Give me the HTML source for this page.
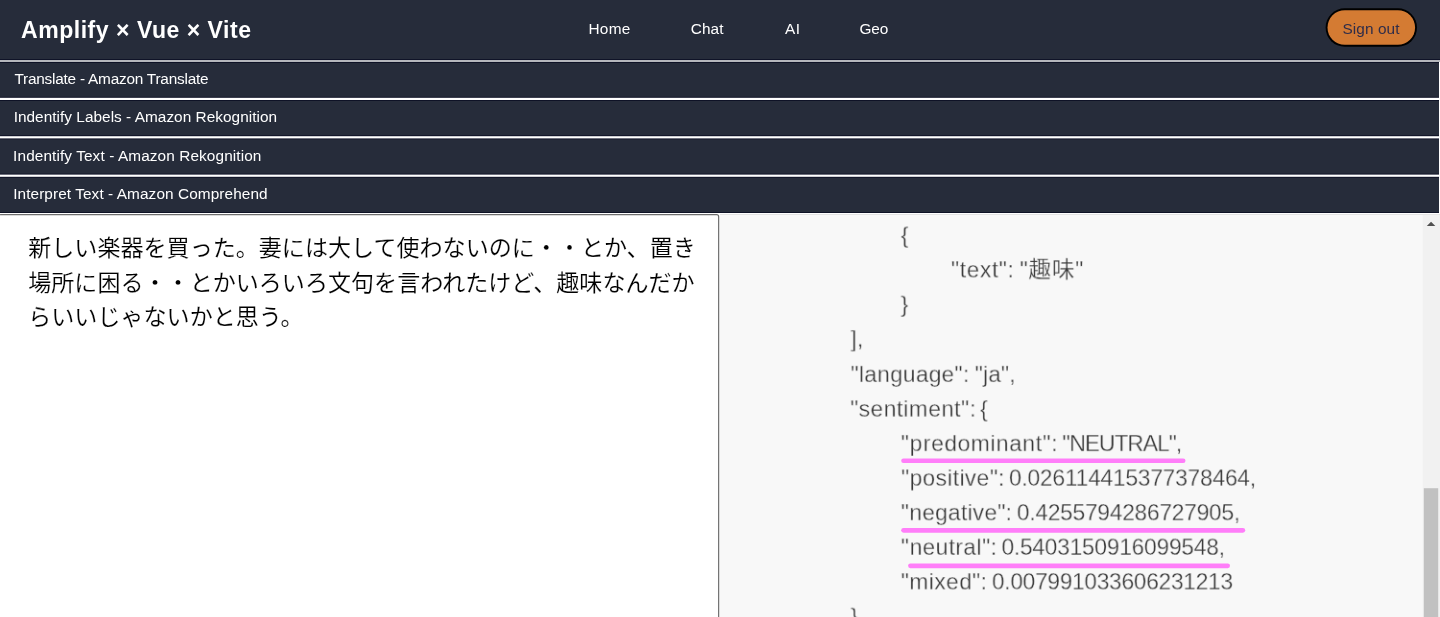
<!DOCTYPE html>
<html lang="ja">
<head>
<meta charset="utf-8">
<title>Amplify × Vue × Vite</title>
<style>
html,body{margin:0;padding:0;background:#fff;overflow:hidden;}
body{width:1440px;height:617px;position:relative;font-family:"Liberation Sans","Noto Sans CJK JP",sans-serif;}
#bg{position:absolute;left:0;top:0;}
#app{position:absolute;left:0;top:0;width:1500px;height:643px;transform:scale(0.96);transform-origin:0 0;overflow:hidden;}
#out{will-change:transform;}
.t{position:absolute;margin:0;padding:0;border:0;background:none;white-space:pre;line-height:1;font-family:inherit;font-weight:normal;}
#title{color:#fff;font-weight:bold;}
.nav,.ih{color:#fff;}
#btn{color:#2f2d49;}
.jp{color:#000;-webkit-text-stroke:0.15px #fff;}
.js{color:#363636;-webkit-text-stroke:0.32px #f8f8f8;}
.js span{display:inline-block;}
#ta{position:absolute;left:-1px;top:223px;width:750px;height:440px;box-sizing:border-box;margin:0;border:1px solid transparent;border-radius:2px;background:transparent;outline:none;resize:none;overflow:hidden;font-family:inherit;font-size:24px;line-height:36px;white-space:pre-wrap;word-break:break-all;}
</style>
</head>
<body>
<svg id="bg" width="1440" height="617" viewBox="0 0 1440 617">
  <!-- header -->
  <rect x="0" y="0" width="1440" height="60" fill="#0e1226"/>
  <rect x="0" y="0" width="1440" height="59.05" fill="#262c3a"/>
  <rect x="0" y="60" width="1440" height="2" fill="#b5b7bc"/>
  <!-- accordion items -->
  <g id="items">
    <rect x="-2" y="62" width="1441" height="35.8" fill="#0e1226"/><rect x="-2" y="62.96" width="1441" height="33.88" fill="#262c3a"/>
    <rect x="-2" y="100" width="1441" height="36.2" fill="#0e1226"/><rect x="-2" y="100.96" width="1441" height="34.28" fill="#262c3a"/>
    <rect x="-2" y="138.4" width="1441" height="36.2" fill="#0e1226"/><rect x="-2" y="139.36" width="1441" height="34.28" fill="#262c3a"/>
    <rect x="-2" y="176.8" width="1441" height="36.2" fill="#0e1226"/><rect x="-2" y="177.76" width="1441" height="34.28" fill="#262c3a"/>
  </g>
  <!-- sign out pill -->
  <rect x="1325.6" y="8.35" width="91.4" height="38.4" rx="19.2" fill="#000"/>
  <rect x="1327.5" y="10.25" width="87.6" height="34.6" rx="17.3" fill="#d47b33"/>
  <!-- textarea -->
  <rect x="-1.5" y="214.7" width="720.15" height="420" rx="2" fill="#fff" stroke="#6e6e6e" stroke-width="1.2"/>
  <!-- output panel -->
  <rect x="720" y="214" width="720" height="403" fill="#e2e2e2"/>
  <rect x="720" y="214.96" width="720" height="403" fill="#f8f8f8"/>
  <!-- highlights -->
  <g stroke="#ff7ef9" stroke-width="4.6" stroke-linecap="round">
    <line x1="903.5" y1="460.7" x2="1183.2" y2="460.7"/>
    <line x1="903.5" y1="530.35" x2="1242.9" y2="530.35"/>
    <line x1="910.4" y1="565.85" x2="1227.7" y2="565.85"/>
  </g>
  <!-- scrollbar -->
  <rect x="1422.7" y="214.96" width="17.3" height="403" fill="#f1f1f1"/>
  <path d="M1426.8 226.1 L1431.05 221.8 L1435.3 226.1 Z" fill="#505050"/>
  <rect x="1423.8" y="488.2" width="14.4" height="130" fill="#c1c1c1"/>
</svg>

<div id="app">
  <header id="header">
    <h1 id="title" class="t" style="left:21.97px;top:20.02px;font-size:24.00px;letter-spacing:0.527px">Amplify × Vue × Vite</h1>
    <nav id="nav">
      <a id="nav1" class="t nav" style="left:612.93px;top:21.97px;font-size:16.00px;letter-spacing:0.330px">Home</a>
      <a id="nav2" class="t nav" style="left:719.57px;top:22.03px;font-size:16.00px;letter-spacing:0.099px">Chat</a>
      <a id="nav3" class="t nav" style="left:817.61px;top:22.00px;font-size:16.00px;letter-spacing:0.536px">AI</a>
      <a id="nav4" class="t nav" style="left:895.39px;top:21.97px;font-size:16.00px;letter-spacing:-0.200px">Geo</a>
    </nav>
    <button id="btn" class="t" style="left:1398.33px;top:21.95px;font-size:16.00px;letter-spacing:0.113px">Sign out</button>
  </header>
  <main id="main">
    <section class="item"><div id="it1" class="t ih" style="left:15.01px;top:74.47px;font-size:16.00px;letter-spacing:-0.228px">Translate - Amazon Translate</div></section>
    <section class="item"><div id="it2" class="t ih" style="left:14.23px;top:113.95px;font-size:16.00px;letter-spacing:0.036px">Indentify Labels - Amazon Rekognition</div></section>
    <section class="item"><div id="it3" class="t ih" style="left:13.67px;top:154.97px;font-size:16.00px;letter-spacing:0.107px">Indentify Text - Amazon Rekognition</div></section>
    <section class="item"><div id="it4" class="t ih" style="left:13.74px;top:193.96px;font-size:16.00px;letter-spacing:0.088px">Interpret Text - Amazon Comprehend</div></section>
    <textarea id="ta" class="jp" spellcheck="false" style="padding:17.00px 12px 0 29.40px;letter-spacing:0.020px">新しい楽器を買った。妻には大して使わないのに・・とか、置き場所に困る・・とかいろいろ文句を言われたけど、趣味なんだからいいじゃないかと思う。</textarea>
    <div id="out">
      <div id="j0" class="t js" style="left:938.43px;top:233.95px;font-size:23.60px"><span id="j0k" style="letter-spacing:0.000px">{</span></div>
      <div id="j1" class="t js" style="left:990.63px;top:269.96px;font-size:23.60px"><span id="j1k" style="letter-spacing:0.696px">"text":</span> <span id="j1v" style="margin-left:-1.23px;letter-spacing:0.742px">"趣味"</span></div>
      <div id="j2" class="t js" style="left:938.32px;top:306.04px;font-size:23.60px"><span id="j2k" style="letter-spacing:0.000px">}</span></div>
      <div id="j3" class="t js" style="left:886.08px;top:341.98px;font-size:23.60px"><span id="j3k" style="letter-spacing:0.000px">],</span></div>
      <div id="j4" class="t js" style="left:886.04px;top:379.04px;font-size:23.60px"><span id="j4k" style="letter-spacing:0.310px">"language":</span> <span id="j4v" style="margin-left:-0.82px;letter-spacing:0.121px">"ja",</span></div>
      <div id="j5" class="t js" style="left:885.76px;top:414.95px;font-size:23.60px"><span id="j5k" style="letter-spacing:0.468px">"sentiment":</span> <span id="j5v" style="margin-left:-2.64px;letter-spacing:0.000px">{</span></div>
      <div id="j6" class="t js" style="left:938.59px;top:450.95px;font-size:23.60px"><span id="j6k" style="letter-spacing:0.662px">"predominant":</span> <span id="j6v" style="margin-left:-2.36px;letter-spacing:-0.950px">"NEUTRAL",</span></div>
      <div id="j7" class="t js" style="left:938.64px;top:486.98px;font-size:23.60px"><span id="j7k" style="letter-spacing:0.434px">"positive":</span> <span id="j7v" style="margin-left:-2.24px;letter-spacing:-0.168px">0.026114415377378464,</span></div>
      <div id="j8" class="t js" style="left:938.53px;top:523.01px;font-size:23.60px"><span id="j8k" style="letter-spacing:0.314px">"negative":</span> <span id="j8v" style="margin-left:-1.78px;letter-spacing:-0.207px">0.4255794286727905,</span></div>
      <div id="j9" class="t js" style="left:938.56px;top:559.03px;font-size:23.60px"><span id="j9k" style="letter-spacing:0.483px">"neutral":</span> <span id="j9v" style="margin-left:-2.27px;letter-spacing:-0.186px">0.5403150916099548,</span></div>
      <div id="j10" class="t js" style="left:938.47px;top:595.03px;font-size:23.60px"><span id="j10k" style="letter-spacing:0.495px">"mixed":</span> <span id="j10v" style="margin-left:-2.01px;letter-spacing:-0.253px">0.007991033606231213</span></div>
      <div id="j11" class="t js" style="left:886.12px;top:631.03px;font-size:23.60px"><span id="j11k" style="letter-spacing:0.000px">}</span></div>
    </div>
  </main>
</div>
</body>
</html>
